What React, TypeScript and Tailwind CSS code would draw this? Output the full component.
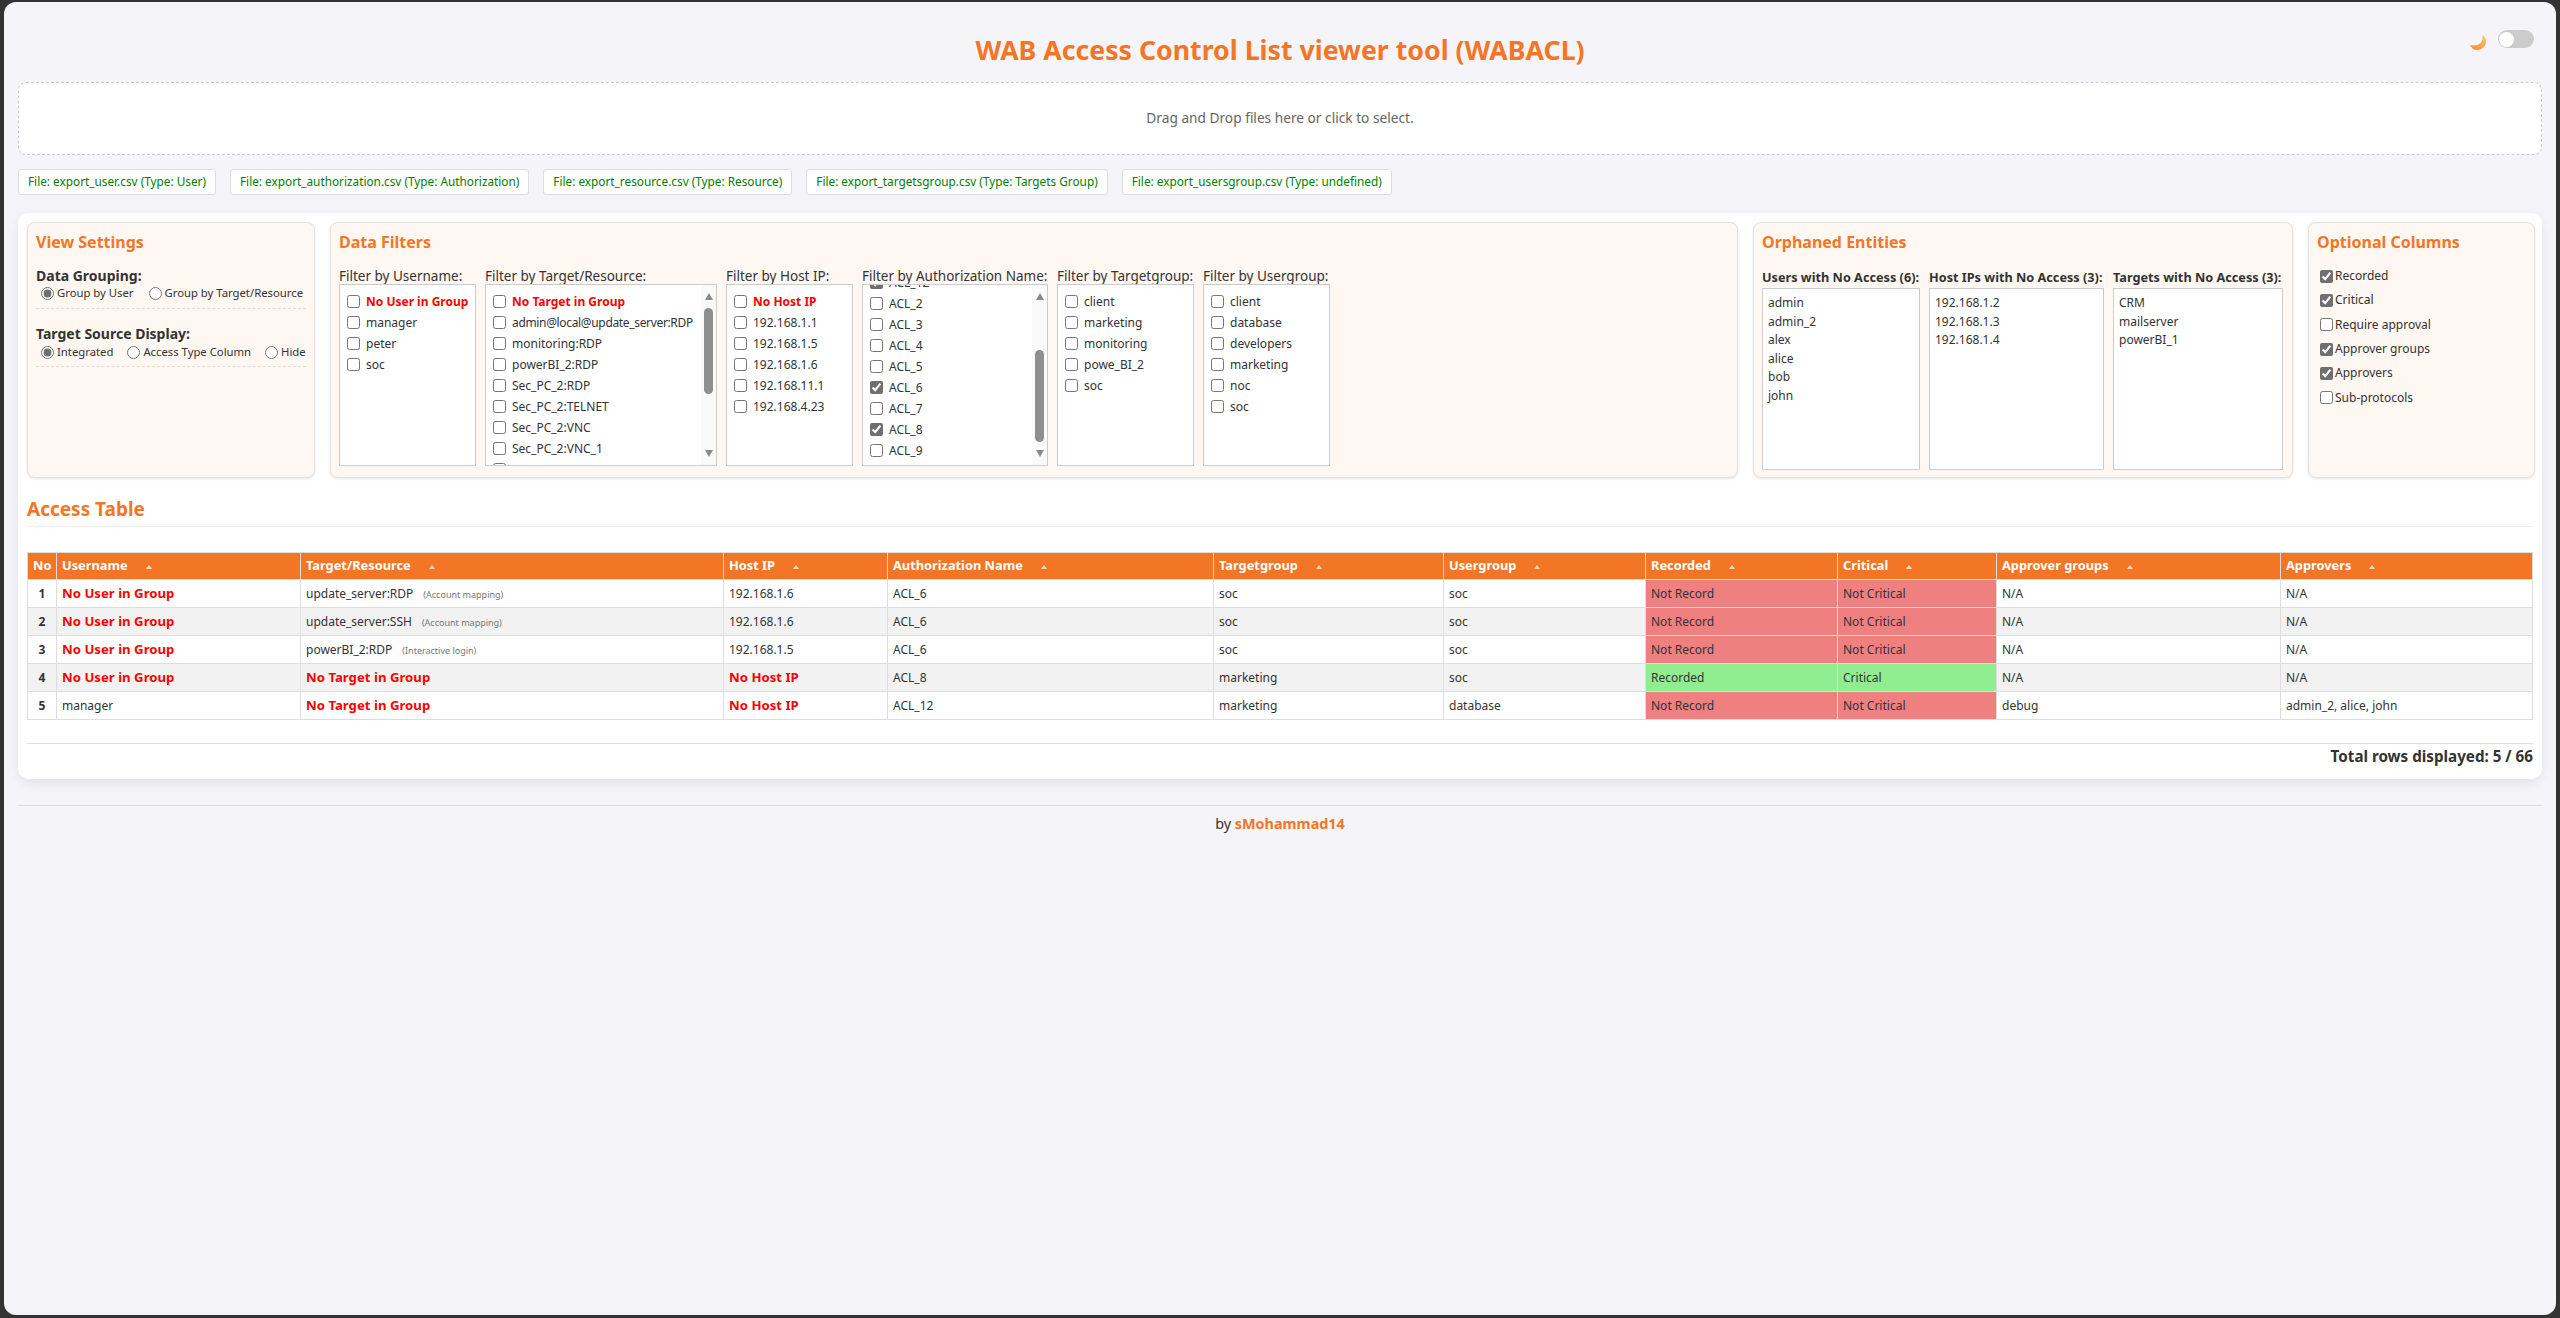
import React from "react";

const FONT = "font-['Noto_Sans','Liberation_Sans',sans-serif]";

function Check({ label, checked = false, red = false }: { label: string; checked?: boolean; red?: boolean }) {
  const cls = red ? "font-bold text-[#ff0000]" : label.startsWith("admin@") ? "tracking-[-0.34px]" : "";
  return (
    <label className="flex h-[21px] items-center gap-[6px] whitespace-nowrap">
      <input type="checkbox" defaultChecked={checked} className="m-0 h-[13px] w-[13px] shrink-0 accent-[#6f6f6f]" />
      <span className={cls}>{label}</span>
    </label>
  );
}

function Scrollbar({ top, height }: { top: number; height: number }) {
  return (
    <div className="flex w-[15px] shrink-0 flex-col items-center bg-[#fafafa] pt-[8px]">
      <div className="h-0 w-0 border-x-[4.5px] border-b-[7px] border-x-transparent border-b-[#8a8a8a]" />
      <div style={{ marginTop: top, height }} className="w-[9px] rounded-[5px] bg-[#8f8f8f]" />
      <div className="mt-auto mb-[8px] h-0 w-0 border-x-[4.5px] border-t-[7px] border-x-transparent border-t-[#8a8a8a]" />
    </div>
  );
}

function Filter({
  label, width, items, checked = [], reds = [], scroll, offset = 0,
}: {
  label: string; width: string; items: string[]; checked?: string[]; reds?: string[];
  scroll?: { top: number; height: number }; offset?: number;
}) {
  return (
    <div className={`flex shrink-0 flex-col ${width}`}>
      <div className="h-[16px] whitespace-nowrap text-[13.5px] leading-[16px]">{label}</div>
      <div className="flex h-[182px] overflow-hidden border border-[#cccccc] bg-white">
        <div className="min-w-0 flex-1 overflow-hidden pl-[7px]">
          <div style={{ marginTop: offset }} className="text-[12px] text-[#333]">
            {items.map((i) => (
              <Check key={i} label={i} checked={checked.includes(i)} red={reds.includes(i)} />
            ))}
          </div>
        </div>
        {scroll && <Scrollbar top={scroll.top} height={scroll.height} />}
      </div>
    </div>
  );
}

function Panel({ title, width, children }: { title: string; width: string; children: React.ReactNode }) {
  return (
    <section className={`h-[256px] shrink-0 rounded-[8px] border border-[#e2e2e2] bg-[#fff7f1] px-[8px] pt-[9px] shadow-[0_1px_3px_rgba(0,0,0,0.1)] ${width}`}>
      <h2 className="h-[22px] text-[16px] font-bold leading-[20px] text-[#f37626]">{title}</h2>
      {children}
    </section>
  );
}

function Orphan({ label, width, items }: { label: string; width: string; items: string[] }) {
  return (
    <div className={`flex shrink-0 flex-col ${width}`}>
      <div className="h-[19px] whitespace-nowrap text-[12.7px] font-bold leading-[16px]">{label}</div>
      <div className="h-[182px] border border-[#cccccc] bg-white px-[5px] pt-[5px] text-[12px] leading-[18.6px]">
        {items.map((i) => <div key={i}>{i}</div>)}
      </div>
    </div>
  );
}

function Radio({ label, checked = false, name }: { label: string; checked?: boolean; name: string }) {
  return (
    <label className="flex items-center gap-[3px] whitespace-nowrap">
      <input type="radio" name={name} defaultChecked={checked} className="m-0 h-[13px] w-[13px] accent-[#6f6f6f]" />
      <span>{label}</span>
    </label>
  );
}

const RED = "text-[13.2px] font-bold text-[#ff0000]";
const BAD = "bg-[#f08080]";
const GOOD = "bg-[#90ee90]";

const columns: { name: string; w: string; sort: boolean }[] = [
  { name: "No", w: "w-[29px]", sort: false },
  { name: "Username", w: "w-[244px]", sort: true },
  { name: "Target/Resource", w: "w-[423px]", sort: true },
  { name: "Host IP", w: "w-[164px]", sort: true },
  { name: "Authorization Name", w: "w-[326px]", sort: true },
  { name: "Targetgroup", w: "w-[230px]", sort: true },
  { name: "Usergroup", w: "w-[202px]", sort: true },
  { name: "Recorded", w: "w-[192px]", sort: true },
  { name: "Critical", w: "w-[159px]", sort: true },
  { name: "Approver groups", w: "w-[284px]", sort: true },
  { name: "Approvers", w: "", sort: true },
];

type Row = {
  user: string; target: string; note?: string; ip: string; auth: string; tg: string; ug: string;
  rec: boolean; crit: boolean; ag: string; ap: string;
};

const rows: Row[] = [
  { user: "No User in Group", target: "update_server:RDP", note: "(Account mapping)", ip: "192.168.1.6", auth: "ACL_6", tg: "soc", ug: "soc", rec: false, crit: false, ag: "N/A", ap: "N/A" },
  { user: "No User in Group", target: "update_server:SSH", note: "(Account mapping)", ip: "192.168.1.6", auth: "ACL_6", tg: "soc", ug: "soc", rec: false, crit: false, ag: "N/A", ap: "N/A" },
  { user: "No User in Group", target: "powerBI_2:RDP", note: "(Interactive login)", ip: "192.168.1.5", auth: "ACL_6", tg: "soc", ug: "soc", rec: false, crit: false, ag: "N/A", ap: "N/A" },
  { user: "No User in Group", target: "No Target in Group", ip: "No Host IP", auth: "ACL_8", tg: "marketing", ug: "soc", rec: true, crit: true, ag: "N/A", ap: "N/A" },
  { user: "manager", target: "No Target in Group", ip: "No Host IP", auth: "ACL_12", tg: "marketing", ug: "database", rec: false, crit: false, ag: "debug", ap: "admin_2, alice, john" },
];

const TD = "h-[28px] border border-[#dddddd] px-[5px] py-0 text-[12px]";

const chips = [
  "File: export_user.csv (Type: User)",
  "File: export_authorization.csv (Type: Authorization)",
  "File: export_resource.csv (Type: Resource)",
  "File: export_targetsgroup.csv (Type: Targets Group)",
  "File: export_usersgroup.csv (Type: undefined)",
];

export default function App() {
  return (
    <div className={`h-[1318px] overflow-hidden bg-[#333333] pt-[2px] pr-[4px] pb-[3px] pl-[4px] text-[#333333] ${FONT}`}>
      <div className="relative h-full rounded-[12px] bg-[#f4f4f9] px-[14px]">
        <div className="absolute right-[22px] top-[25px] flex items-center gap-[11px]">
          <svg width="17" height="16" viewBox="0 0 17 16" className="mt-[8px]">
            <defs>
              <linearGradient id="moon" x1="1" y1="0" x2="0" y2="1">
                <stop offset="0" stopColor="#fbc95a" />
                <stop offset="1" stopColor="#f08a3c" />
              </linearGradient>
            </defs>
            <path d="M12.5 0 C15 2 16.5 5 16 8 C15 12 11 15 7.5 15 C4 15 1.5 13 0 10 C4 11 8 10.5 10.5 8 C12.5 6 13 3 12.5 0 Z" fill="url(#moon)" />
          </svg>
          <div className="flex h-[18px] w-[36px] items-center rounded-full bg-[#cccccc] pl-[1px]">
            <div className="h-[15px] w-[15px] rounded-full bg-white" />
          </div>
        </div>

        <h1 className="pt-[32px] text-center text-[26.7px] font-bold leading-[32px] text-[#f37626]">
          WAB Access Control List viewer tool (WABACL)
        </h1>

        <div className="mt-[16px] flex h-[73px] items-center justify-center rounded-[8px] border border-dashed border-[#cccccc] bg-white text-[13.7px] text-[#666666]">
          Drag and Drop files here or click to select.
        </div>

        <div className="mt-[14px] flex gap-[14px]">
          {chips.map((c) => (
            <div key={c} className="flex h-[26px] items-center whitespace-nowrap rounded-[3px] border border-[#dddddd] bg-white px-[9px] text-[11.8px] text-[#008000]">
              {c}
            </div>
          ))}
        </div>

        <main className="mt-[18px] h-[566px] rounded-[10px] bg-white px-[9px] pt-[9px] shadow-[0_4px_12px_rgba(0,0,0,0.08)]">
          <div className="flex gap-[15px]">
            <Panel title="View Settings" width="w-[288px]">
              <div className="mt-[14px] text-[14px] font-bold leading-[16px]">Data Grouping:</div>
              <div className="flex h-[18px] items-center gap-[15px] border-0 pl-[5px] text-[11.3px]">
                <Radio name="g" label="Group by User" checked />
                <Radio name="g" label="Group by Target/Resource" />
              </div>
              <div className="mt-[6px] border-b border-dashed border-[#e2dcd2]" />
              <div className="mt-[16px] text-[14px] font-bold leading-[18px]">Target Source Display:</div>
              <div className="flex h-[18px] items-center gap-[14px] pl-[5px] text-[11.3px]">
                <Radio name="t" label="Integrated" checked />
                <Radio name="t" label="Access Type Column" />
                <Radio name="t" label="Hide" />
              </div>
              <div className="mt-[5px] border-b border-dashed border-[#e2dcd2]" />
            </Panel>

            <Panel title="Data Filters" width="w-[1408px]">
              <div className="mt-[14px] flex gap-[9px]">
                <Filter label="Filter by Username:" width="w-[137px]" reds={["No User in Group"]} items={["No User in Group", "manager", "peter", "soc"]} offset={6} />
                <Filter label="Filter by Target/Resource:" width="w-[232px]" reds={["No Target in Group"]} scroll={{ top: 8, height: 86 }} offset={6}
                  items={["No Target in Group", "admin@local@update_server:RDP", "monitoring:RDP", "powerBI_2:RDP", "Sec_PC_2:RDP", "Sec_PC_2:TELNET", "Sec_PC_2:VNC", "Sec_PC_2:VNC_1", "Sec_PC:RDP"]} />
                <Filter label="Filter by Host IP:" width="w-[127px]" reds={["No Host IP"]} items={["No Host IP", "192.168.1.1", "192.168.1.5", "192.168.1.6", "192.168.11.1", "192.168.4.23"]} offset={6} />
                <Filter label="Filter by Authorization Name:" width="w-[186px]" checked={["ACL_12", "ACL_6", "ACL_8"]} scroll={{ top: 50, height: 92 }} offset={-13}
                  items={["ACL_12", "ACL_2", "ACL_3", "ACL_4", "ACL_5", "ACL_6", "ACL_7", "ACL_8", "ACL_9"]} />
                <Filter label="Filter by Targetgroup:" width="w-[137px]" items={["client", "marketing", "monitoring", "powe_BI_2", "soc"]} offset={6} />
                <Filter label="Filter by Usergroup:" width="w-[127px]" items={["client", "database", "developers", "marketing", "noc", "soc"]} offset={6} />
              </div>
            </Panel>

            <Panel title="Orphaned Entities" width="w-[540px]">
              <div className="mt-[15px] flex gap-[9px]">
                <Orphan label="Users with No Access (6):" width="w-[158px]" items={["admin", "admin_2", "alex", "alice", "bob", "john"]} />
                <Orphan label="Host IPs with No Access (3):" width="w-[175px]" items={["192.168.1.2", "192.168.1.3", "192.168.1.4"]} />
                <Orphan label="Targets with No Access (3):" width="w-[170px]" items={["CRM", "mailserver", "powerBI_1"]} />
              </div>
            </Panel>

            <Panel title="Optional Columns" width="w-[227px]">
              <div className="mt-[10px] flex flex-col pl-[3px] text-[12px]">
                {[["Recorded", true], ["Critical", true], ["Require approval", false], ["Approver groups", true], ["Approvers", true], ["Sub-protocols", false]].map(([l, c]) => (
                  <label key={l as string} className="flex h-[24.3px] items-center gap-[2px]">
                    <input type="checkbox" defaultChecked={c as boolean} className="m-0 h-[13px] w-[13px] accent-[#6f6f6f]" />
                    <span>{l as string}</span>
                  </label>
                ))}
              </div>
            </Panel>
          </div>

          <h2 className="mt-[20px] h-[29px] border-b border-[#eeeeee] text-[19px] font-bold leading-[22px] text-[#f37626]">Access Table</h2>

          <table className="mt-[25px] w-full table-fixed border-collapse text-left">
            <thead>
              <tr>
                {columns.map((c) => (
                  <th key={c.name} className={`h-[27px] border border-[#dddddd] bg-[#f37626] px-[5px] py-0 text-[12.8px] font-bold text-white ${c.w}`}>
                    <span className="flex items-center">
                      {c.name}
                      {c.sort && <span className="ml-[18px] mt-[2px] h-0 w-0 border-x-[3px] border-b-[4px] border-x-transparent border-b-[#ffd9bf]" />}
                    </span>
                  </th>
                ))}
              </tr>
            </thead>
            <tbody>
              {rows.map((r, i) => (
                <tr key={i} className={i % 2 === 1 ? "bg-[#f2f2f2]" : "bg-white"}>
                  <td className={`${TD} text-center font-bold`}>{i + 1}</td>
                  <td className={`${TD} ${r.user.startsWith("No ") ? RED : ""}`}>{r.user}</td>
                  <td className={`${TD} ${r.target.startsWith("No ") ? RED : ""}`}>
                    {r.target}
                    {r.note && <span className="ml-[10px] text-[9px] text-[#777777]">{r.note}</span>}
                  </td>
                  <td className={`${TD} ${r.ip.startsWith("No ") ? RED : ""}`}>{r.ip}</td>
                  <td className={TD}>{r.auth}</td>
                  <td className={TD}>{r.tg}</td>
                  <td className={TD}>{r.ug}</td>
                  <td className={`${TD} ${r.rec ? GOOD : BAD}`}>{r.rec ? "Recorded" : "Not Record"}</td>
                  <td className={`${TD} ${r.crit ? GOOD : BAD}`}>{r.crit ? "Critical" : "Not Critical"}</td>
                  <td className={TD}>{r.ag}</td>
                  <td className={TD}>{r.ap}</td>
                </tr>
              ))}
            </tbody>
          </table>

          <div className="mt-[23px] border-t border-[#dddddd] pt-[3px] text-right text-[15.2px] font-bold leading-[18px]">
            Total rows displayed: 5 / 66
          </div>
        </main>

        <footer className="mt-[26px] border-t border-[#dddddd] pt-[9px] text-center text-[14.4px] leading-[18px]">
          by <span className="font-bold text-[#f37626]">sMohammad14</span>
        </footer>
      </div>
    </div>
  );
}
